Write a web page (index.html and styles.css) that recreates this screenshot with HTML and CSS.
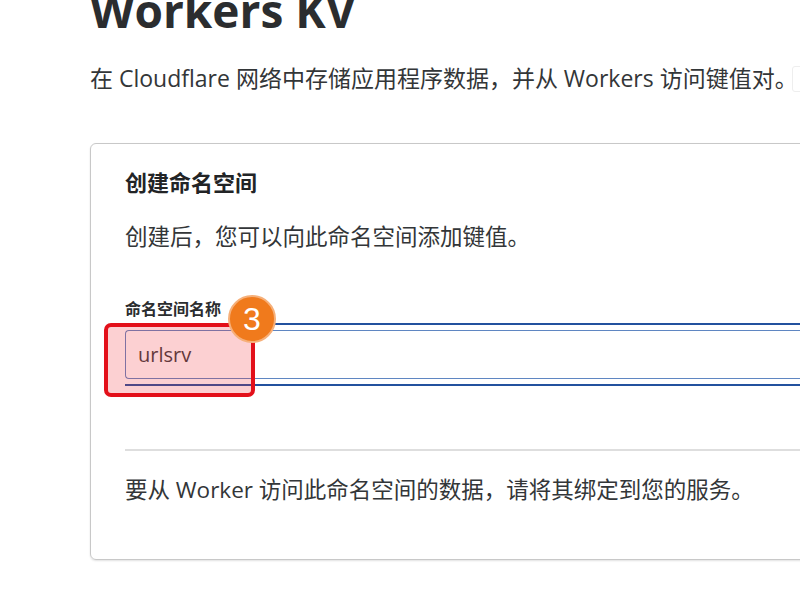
FILE: index.html
```html
<!DOCTYPE html>
<html lang="zh-CN">
<head>
<meta charset="utf-8">
<title>Workers KV</title>
<link rel="stylesheet" href="styles.css">
</head>
<body>
<main class="page">
  <h1 class="title">Workers KV</h1>
  <p class="subtitle">在 Cloudflare 网络中存储应用程序数据，并从 Workers 访问键值对。<span class="edge-mark"></span></p>
  <section class="card">
    <h2 class="card-title">创建命名空间</h2>
    <p class="card-desc">创建后，您可以向此命名空间添加键值。</p>
    <label class="field-label" for="ns">命名空间名称</label>
    <div class="focus-ring">
      <input id="ns" class="text-input" type="text" value="urlsrv">
    </div>
    <hr class="divider">
    <p class="card-foot">要从 Worker 访问此命名空间的数据，请将其绑定到您的服务。</p>
    <div class="highlight"></div>
    <div class="badge">3</div>
  </section>
</main>
</body>
</html>
```
FILE: styles.css
```css
html, body {
  margin: 0;
  padding: 0;
  background: #ffffff;
  overflow: hidden;
  width: 800px;
  height: 600px;
}
body {
  font-family: "Open Sans", "Noto Sans CJK SC", sans-serif;
  color: #333638;
}
.page {
  padding-left: 90px;
}
.title {
  margin: -18px 0 0 0;
  font-size: 46px;
  line-height: 56px;
  font-weight: 700;
  color: #2b2d2f;
  white-space: nowrap;
}
.subtitle {
  margin: 25px 0 0 0;
  font-size: 23px;
  line-height: 30px;
  white-space: nowrap;
  position: relative;
}
.edge-mark {
  position: absolute;
  left: 702px;
  top: 3px;
  width: 12px;
  height: 24px;
  border: 1px solid #eeeeee;
  border-radius: 3px;
}
.card {
  position: relative;
  margin-top: 50px;
  width: 800px;
  border: 1px solid #c8c8c8;
  border-radius: 6px;
  box-shadow: 0 1px 2px rgba(0, 0, 0, 0.12);
  padding: 23px 0 54px 34px;
  box-sizing: border-box;
}
.card-title {
  margin: 0;
  font-size: 22px;
  line-height: 30px;
  font-weight: 700;
  color: #222426;
}
.card-desc {
  margin: 25px 0 0 0;
  font-size: 22.5px;
  line-height: 30px;
}
.field-label {
  display: block;
  margin-top: 47px;
  font-size: 16px;
  line-height: 20px;
  font-weight: 700;
  color: #2b2d2f;
}
.focus-ring {
  margin-top: 4px;
  border-top: 2px solid #23519e;
  border-bottom: 2px solid #23519e;
  padding: 5px 0;
}
.text-input {
  display: block;
  box-sizing: border-box;
  width: 100%;
  height: 49px;
  border: 1px solid #5f86c2;
  border-right: none;
  border-radius: 4px 0 0 4px;
  padding: 0 12px;
  font-family: "Open Sans", "Noto Sans CJK SC", sans-serif;
  font-size: 20px;
  color: #3a3d40;
  background: transparent;
  outline: none;
}
.divider {
  margin: 63px 0 0 0;
  border: none;
  border-top: 2px solid #dedede;
  height: 0;
}
.card-foot {
  margin: 24px 0 0 0;
  font-size: 22.5px;
  line-height: 30px;
  white-space: nowrap;
}
.highlight {
  position: absolute;
  left: 13px;
  top: 179px;
  width: 151px;
  height: 74px;
  box-sizing: border-box;
  border: 4px solid #e3101a;
  border-radius: 7px;
  background: rgba(240, 40, 50, 0.22);
}
.badge {
  position: absolute;
  left: 137px;
  top: 151px;
  width: 48px;
  height: 48px;
  box-sizing: border-box;
  border-radius: 50%;
  background: #f07a1c;
  border: 2px solid #f6b07a;
  color: #ffffff;
  font-family: "Liberation Sans", "DejaVu Sans", sans-serif;
  font-size: 32px;
  line-height: 44px;
  text-align: center;
}
```
